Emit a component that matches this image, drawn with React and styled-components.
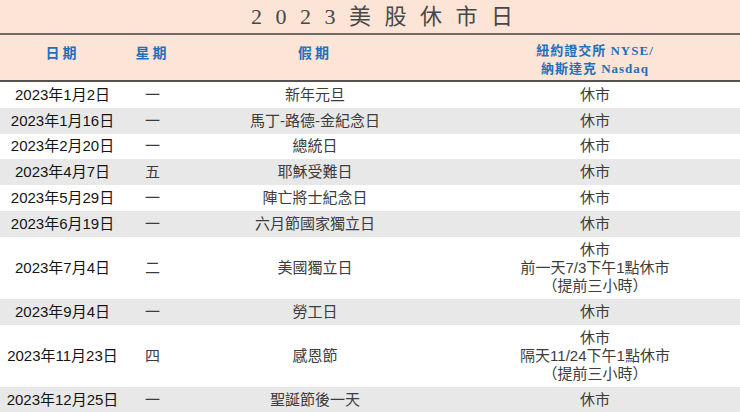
import React from "react";
import styled, { createGlobalStyle } from "styled-components";

const Global = createGlobalStyle`
  html, body { margin: 0; padding: 0; background: #ffffff; }
  body { width: 740px; height: 412px; overflow: hidden; }
`;

const COLS = "125px 55px 270px 1fr";
const BODY_FONT = `"Liberation Sans", "Noto Sans CJK TC", sans-serif`;

const Sheet = styled.div`
  width: 740px;
  display: flex;
  flex-direction: column;
  font-family: ${BODY_FONT};
`;

const TitleBar = styled.div`
  height: 35px;
  background: #fce4d6;
  border-bottom: 2px solid #6e6a66;
  display: flex;
  align-items: center;
  justify-content: center;
  padding-left: 28px;
  box-sizing: border-box;
`;

const Title = styled.h1`
  margin: 0;
  font-family: "Liberation Serif", "Noto Sans CJK TC", serif;
  font-weight: 400;
  font-size: 22px;
  letter-spacing: 4px;
  color: #474747;
  white-space: pre;
  line-height: 1;
`;

const HeaderRow = styled.div`
  display: grid;
  grid-template-columns: ${COLS};
  background: #fce4d6;
  border-bottom: 2px solid #555250;
  align-items: start;
  padding-top: 10px;
  box-sizing: border-box;
  height: 47px;
`;

const HeadCell = styled.div`
  text-align: center;
  color: #1f6fbd;
  font-family: "Liberation Serif", "Noto Sans CJK TC", serif;
  font-weight: 700;
  font-size: ${(p) => (p.$small ? "13px" : "14px")};
  letter-spacing: ${(p) => (p.$small ? "1px" : "3px")};
  line-height: 18px;
  margin-top: ${(p) => (p.$small ? "-3px" : "0")};
  white-space: pre-line;
`;

const Row = styled.div`
  display: grid;
  grid-template-columns: ${COLS};
  align-items: center;
  background: ${(p) => (p.$alt ? "#e8e8e8" : "#ffffff")};
  padding: 3.75px 0;
  border-bottom: ${(p) => (p.$last ? "1.5px solid #8a8a8a" : "none")};
`;

const DateCell = styled.div`
  text-align: center;
  font-size: 15px;
  line-height: 18.3px;
  color: #141414;
`;

const TextCell = styled.div`
  text-align: center;
  font-size: 15px;
  line-height: 18.3px;
  color: #3c3c3c;
  white-space: pre-line;
`;

const rows = [
  ["2023年1月2日", "一", "新年元旦", "休市"],
  ["2023年1月16日", "一", "馬丁-路德-金紀念日", "休市"],
  ["2023年2月20日", "一", "總統日", "休市"],
  ["2023年4月7日", "五", "耶穌受難日", "休市"],
  ["2023年5月29日", "一", "陣亡將士紀念日", "休市"],
  ["2023年6月19日", "一", "六月節國家獨立日", "休市"],
  ["2023年7月4日", "二", "美國獨立日", "休市\n前一天7/3下午1點休市\n（提前三小時）"],
  ["2023年9月4日", "一", "勞工日", "休市"],
  ["2023年11月23日", "四", "感恩節", "休市\n隔天11/24下午1點休市\n（提前三小時）"],
  ["2023年12月25日", "一", "聖誕節後一天", "休市"],
];

export default function App() {
  return (
    <>
      <Global />
      <Sheet>
        <TitleBar>
          <Title>2 0 2 3 美 股 休 市 日</Title>
        </TitleBar>
        <HeaderRow>
          <HeadCell>日期</HeadCell>
          <HeadCell>星期</HeadCell>
          <HeadCell>假期</HeadCell>
          <HeadCell $small>{"紐約證交所 NYSE/\n納斯達克 Nasdaq"}</HeadCell>
        </HeaderRow>
        {rows.map((r, i) => (
          <Row key={i} $alt={i % 2 === 1} $last={i === rows.length - 1}>
            <DateCell>{r[0]}</DateCell>
            <TextCell>{r[1]}</TextCell>
            <TextCell>{r[2]}</TextCell>
            <TextCell>{r[3]}</TextCell>
          </Row>
        ))}
      </Sheet>
    </>
  );
}
